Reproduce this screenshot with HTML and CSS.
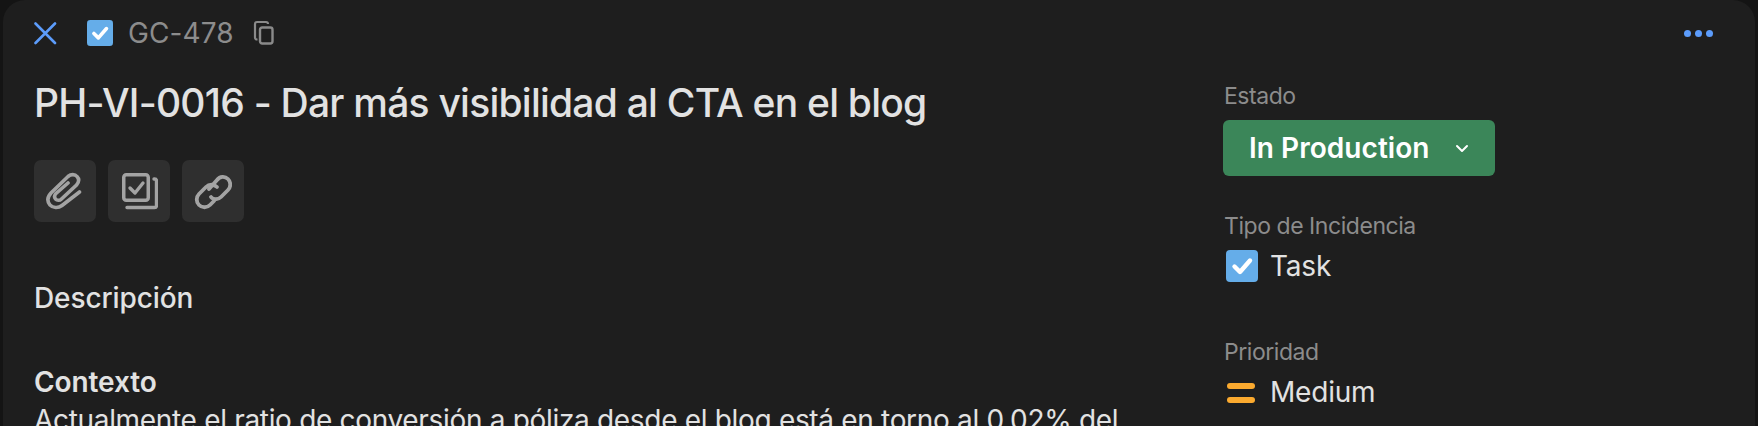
FILE: index.html
```html
<!DOCTYPE html>
<html lang="es">
<head>
<meta charset="utf-8">
<title>GC-478</title>
<link rel="stylesheet" href="styles.css">
</head>
<body>
<div class="panel">
  <header class="topbar">
    <div class="topbar-left">
      <button class="close" aria-label="Cerrar">
        <svg width="23" height="23" viewBox="0 0 23 23"><path d="M1.5 1.5 L21 21 M21 1.5 L1.5 21" fill="none" stroke="#5c9cfb" stroke-width="2.6" stroke-linecap="round"/></svg>
      </button>
      <svg class="type-icon" width="26" height="26" viewBox="0 0 32 32"><rect width="32" height="32" rx="4" fill="#65ade9"/><path d="M8.5 16.5 L14 22 L24 10.5" fill="none" stroke="#fff" stroke-width="4.4" stroke-linecap="round" stroke-linejoin="round"/></svg>
      <span class="issue-key">GC-478</span>
      <svg class="copy" width="22" height="26" viewBox="0 0 22 26"><path d="M4.5 19.5 H4 A2 2 0 0 1 2 17.5 V4 A2 2 0 0 1 4 2 H13 A2 2 0 0 1 15 4" fill="none" stroke="#8a8a8a" stroke-width="2.2"/><rect x="7" y="7.5" width="12.5" height="16" rx="2.2" fill="none" stroke="#8a8a8a" stroke-width="2.4"/></svg>
    </div>
    <div class="more"><i></i><i></i><i></i></div>
  </header>
  <div class="columns">
    <main class="main">
      <h1 class="title">PH-VI-0016 - Dar más visibilidad al CTA en el blog</h1>
      <div class="actions">
        <button class="action" aria-label="Adjuntar">
          <svg width="38" height="38" viewBox="0 0 38 38"><path d="M33.5 20 L16 33.5 C12 36.5 7 36 4 33 C1 29.5 1.5 25 5 21 L22 4.5 C25 2 29 2 31 4.5 C33.5 7 33 10 30.5 13 L15.5 27 C13.5 29 11 28.5 9.5 27 C8 25 8.5 23 10 21.5 L22 11" fill="none" stroke="#a3a3a3" stroke-width="3.6" stroke-linecap="round"/></svg>
        </button>
        <button class="action" aria-label="Subtarea">
          <svg width="38" height="38" viewBox="0 0 38 38"><rect x="3.75" y="2.75" width="24.5" height="25.5" rx="2.5" fill="none" stroke="#a3a3a3" stroke-width="3.5"/><path d="M10 16 L15 21 L23 11" fill="none" stroke="#a3a3a3" stroke-width="3.4" stroke-linecap="round" stroke-linejoin="round"/><path d="M34 7 H34.5 A2 2 0 0 1 36.5 9 V33.5 A2 2 0 0 1 34.5 35.5 H7" fill="none" stroke="#a3a3a3" stroke-width="3.4" stroke-linecap="round"/></svg>
        </button>
        <button class="action" aria-label="Enlazar">
          <svg width="38" height="38" viewBox="0 0 38 38"><path d="M15 17 L23 8 C26 4 31 4 34 7 C37 10 37 15 34 18 L27 25 C24 28 19 28 17 25" fill="none" stroke="#a3a3a3" stroke-width="3.8" stroke-linecap="round"/><path d="M23 15 C20 12 15 12 12 15 L5 22 C2 25 2 30 5 33 C8 36 13 36 16 33 L20 29" fill="none" stroke="#a3a3a3" stroke-width="3.8" stroke-linecap="round"/></svg>
        </button>
      </div>
      <h2 class="section-title">Descripción</h2>
      <h3 class="subheading">Contexto</h3>
      <p class="body-text">Actualmente el ratio de conversión a póliza desde el blog está en torno al 0,02% del</p>
    </main>
    <aside class="side">
      <div class="field field-status">
        <div class="label">Estado</div>
        <button class="status">
          <span>In Production</span>
          <svg width="14" height="9" viewBox="0 0 14 9"><path d="M2 2 L7 7 L12 2" fill="none" stroke="#fff" stroke-width="2" stroke-linecap="round" stroke-linejoin="round"/></svg>
        </button>
      </div>
      <div class="field field-type">
        <div class="label">Tipo de Incidencia</div>
        <div class="value">
          <span class="value-icon"><svg width="32" height="32" viewBox="0 0 32 32"><rect width="32" height="32" rx="4" fill="#65ade9"/><path d="M8.5 16.5 L14 22 L24 10.5" fill="none" stroke="#fff" stroke-width="4.4" stroke-linecap="round" stroke-linejoin="round"/></svg></span>
          <span>Task</span>
        </div>
      </div>
      <div class="field">
        <div class="label">Prioridad</div>
        <div class="value">
          <span class="value-icon"><svg width="30" height="24" viewBox="0 0 30 24"><rect x="1" y="3" width="28" height="6" rx="3" fill="#fbaa2f"/><rect x="1" y="17" width="28" height="6" rx="3" fill="#fbaa2f"/></svg></span>
          <span>Medium</span>
        </div>
      </div>
    </aside>
  </div>
</div>
</body>
</html>
```
FILE: styles.css
```css
* { box-sizing: border-box; }
html, body {
  margin: 0;
  height: 426px;
  overflow: hidden;
  background: #141414;
  font-family: Inter, "Liberation Sans", sans-serif;
}
h1, h2, h3, p { margin: 0; }
button { border: 0; padding: 0; background: none; font: inherit; color: inherit; }
.panel {
  margin: 0 3px;
  height: 426px;
  background: #1e1e1e;
  border-radius: 22px 22px 0 0;
  padding: 0 0 0 31px;
  overflow: hidden;
}
.topbar {
  height: 66px;
  display: flex;
  align-items: center;
  justify-content: space-between;
  padding-right: 42px;
}
.topbar-left { display: flex; align-items: center; }
.close { display: flex; width: 23px; margin-right: 30px; }
.type-icon { margin-right: 15px; }
.issue-key { font-size: 28px; letter-spacing: 0.1px; color: #8c8c8c; margin-right: 19px; }
.copy { display: block; }
.more { display: flex; gap: 4px; }
.more i { width: 7px; height: 7px; border-radius: 50%; background: #5c9cfb; }
.columns { display: flex; }
.main { width: 1189px; flex: none; }
.title { font-size: 39px; letter-spacing: -0.76px; line-height: 46px; font-weight: 500; color: #e2e2e2; margin-top: 14px; }
.actions { display: flex; gap: 12px; margin-top: 34px; }
.action {
  width: 62px;
  height: 62px;
  border-radius: 7px;
  background: #2f2f2f;
  display: flex;
  align-items: center;
  justify-content: center;
}
.section-title { font-size: 28px; letter-spacing: -0.1px; line-height: 32px; font-weight: 500; color: #e2e2e2; margin-top: 60px; }
.subheading { font-size: 28px; letter-spacing: -0.1px; line-height: 32px; font-weight: 600; color: #e2e2e2; margin-top: 52px; }
.body-text { font-size: 28px; letter-spacing: -0.32px; line-height: 34px; color: #e2e2e2; margin-top: 5px; white-space: nowrap; }
.side { width: 300px; padding-top: 16px; }
.label { font-size: 23px; letter-spacing: -0.45px; line-height: 28px; color: #8c8c8c; padding-left: 1px; }
.field-status { margin-bottom: 36px; }
.field-type { margin-bottom: 53px; }
.status {
  display: flex;
  align-items: center;
  width: 272px;
  height: 56px;
  margin-top: 10px;
  padding: 0 26px 0 26px;
  justify-content: space-between;
  border-radius: 6px;
  background: #3b8659;
  color: #fff;
  font-size: 28px;
  letter-spacing: 0.05px;
  font-weight: 600;
}
.value { display: flex; align-items: center; font-size: 28px; letter-spacing: -0.2px; color: #e2e2e2; height: 38px; margin-top: 7px; }
.value-icon { display: flex; width: 47px; padding-left: 3px; }
```
